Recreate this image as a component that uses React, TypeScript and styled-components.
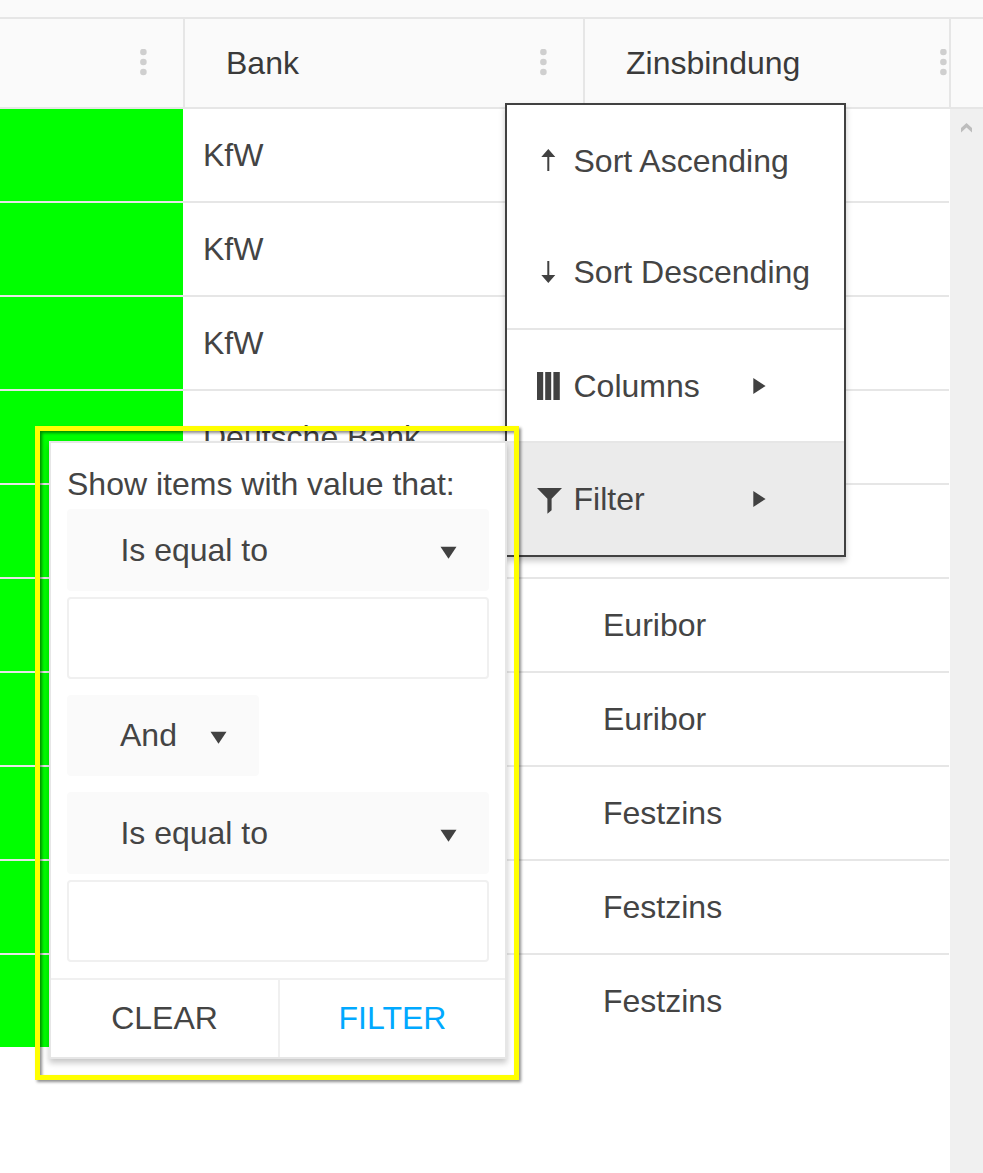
import React from "react";
import styled, { createGlobalStyle } from "styled-components";

const GlobalStyle = createGlobalStyle`
  *, *::before, *::after { box-sizing: border-box; }
  body {
    margin: 0;
    background: #fff;
    color: #444;
    font: 32px/36px "Liberation Sans", Arial, sans-serif;
    overflow: hidden;
  }
`;

const Page = styled.div`
  position: relative;
  width: 983px;
  height: 1173px;
  overflow: hidden;
  display: flex;
  flex-direction: column;
`;

const Toolbar = styled.div`
  height: 19px;
  flex: none;
  background: #fafafa;
  border-bottom: 2px solid #e6e6e6;
`;

const HeaderRow = styled.div`
  display: grid;
  grid-template-columns: 185px 400px 366px 1fr;
  height: 90px;
  flex: none;
  background: #fafafa;
  border-bottom: 2px solid #e6e6e6;
  color: #3a3a3a;
`;

const HeaderCell = styled.div<{ $tight?: boolean }>`
  display: flex;
  align-items: center;
  justify-content: space-between;
  padding: 0 ${(p) => (p.$tight ? "2px" : "36px")} 0 41px;
  border-right: 2px solid #e6e6e6;
`;

const Dots = styled.svg`
  display: block;
  width: 7px;
  height: 27px;
  margin-bottom: 2px;
  fill: #cfcfcf;
`;

const Body = styled.div`
  display: flex;
  flex: 1;
`;

const Rows = styled.div`
  width: 949px;
`;

const Row = styled.div`
  display: grid;
  grid-template-columns: 183px 400px 366px;
  height: 94px;
  border-bottom: 2px solid #e6e6e6;
  &:last-child { border-bottom-color: transparent; }
`;

const Cell = styled.div<{ $fill?: string }>`
  padding-left: 20px;
  line-height: 92px;
  background: ${(p) => p.$fill ?? "transparent"};
`;

const ScrollTrack = styled.div`
  width: 33px;
  margin-left: auto;
  padding: 14px 0 0 11px;
  background: #f0f0f0;
  svg { display: block; }
`;

const Menu = styled.div`
  position: absolute;
  left: 505px;
  top: 103px;
  width: 341px;
  height: 454px;
  display: flex;
  flex-direction: column;
  background: #fff;
  border: 2px solid #414141;
  box-shadow: 0 4px 6px rgba(0, 0, 0, 0.22);
`;

const SortGroup = styled.div`
  padding-bottom: 1px;
`;

const MenuItem = styled.div<{ $active?: boolean; $height: number }>`
  display: flex;
  align-items: center;
  height: ${(p) => p.$height}px;
  padding-left: 29px;
  background: ${(p) => (p.$active ? "#ebebeb" : "#fff")};
  svg { display: block; flex: none; }
`;

const MenuLabel = styled.span`
  width: 179.5px;
  margin-left: 9.5px;
  white-space: nowrap;
`;

const Separator = styled.div`
  height: 2px;
  background: #e6e6e6;
`;

const Popup = styled.div`
  position: absolute;
  left: 49px;
  top: 441px;
  width: 458px;
  height: 618px;
  display: flex;
  flex-direction: column;
  background: #fff;
  border: 2px solid #e6e6e6;
  box-shadow: 0 4px 6px rgba(0, 0, 0, 0.22);
`;

const Form = styled.div`
  flex: 1;
  padding: 23px 16px 0;
`;

const Prompt = styled.div`
  height: 43px;
  white-space: nowrap;
`;

const Select = styled.div<{ $small?: boolean }>`
  display: flex;
  align-items: center;
  justify-content: space-between;
  width: ${(p) => (p.$small ? "192px" : "auto")};
  height: ${(p) => (p.$small ? "81px" : "82px")};
  padding: 0 32px ${(p) => (p.$small ? "1px" : "0")} ${(p) => (p.$small ? "53px" : "53.4px")};
  border-radius: 4px;
  background: #fafafa;
  svg { display: block; margin-top: 4px; }
`;

const Input = styled.input`
  display: block;
  width: 100%;
  height: 82px;
  margin: 6px 0 16px;
  border: 2px solid #f0f0f0;
  border-radius: 4px;
  background: #fff;
  font: inherit;
  outline: none;
`;

const Gap = styled.div`
  height: 16px;
`;

const Actions = styled.div`
  display: grid;
  grid-template-columns: 229px 1fr;
  height: 79px;
  border-top: 2px solid #f0f0f0;
`;

const Action = styled.button<{ $primary?: boolean }>`
  padding: 0 0 2px;
  border: 0;
  border-right: ${(p) => (p.$primary ? "0" : "2px solid #f0f0f0")};
  background: none;
  font: inherit;
  color: ${(p) => (p.$primary ? "#00a9ff" : "#444")};
`;

const Highlight = styled.div`
  position: absolute;
  left: 35px;
  top: 426px;
  width: 484px;
  height: 654px;
  border: 5px solid #ffff00;
  filter: drop-shadow(2px 2px 1.5px rgba(0, 0, 0, 0.45));
  pointer-events: none;
`;

const MoreIcon = () => (
  <Dots viewBox="0 0 7 27">
    <circle cx="3.4" cy="3" r="3.3" />
    <circle cx="3.4" cy="13" r="3.3" />
    <circle cx="3.4" cy="23" r="3.3" />
  </Dots>
);

const Caret = () => (
  <svg width="17" height="13" viewBox="0 0 17 13">
    <path d="M.5 .7h16l-8 12z" fill="#414141" />
  </svg>
);

const SubmenuArrow = () => (
  <svg width="13" height="16" viewBox="0 0 13 16">
    <path d="M.3 0v16L12.6 8z" fill="#414141" />
  </svg>
);

const iconPaths = {
  up: "M12.3 2l7 8h-6v14h-2V10h-6z",
  down: "M12.3 25l7-8h-6V3h-2v14h-6z",
  columns: "M1 0h6.2v28H1zM9.2 0h6v28h-6zM17.4 0h6.4v28h-6.4z",
  filter: "M1 3h25L15.6 13.8V25.2l-4.2 3.5V13.8z",
};

const MenuIcon = ({ name }: { name: keyof typeof iconPaths }) => (
  <svg width="28" height="28" viewBox="0 0 28 28" overflow="visible">
    <path d={iconPaths[name]} fill="#414141" />
  </svg>
);

const rows: [string, string][] = [
  ["KfW", ""],
  ["KfW", ""],
  ["KfW", ""],
  ["Deutsche Bank", ""],
  ["", ""],
  ["", "Euribor"],
  ["", "Euribor"],
  ["", "Festzins"],
  ["", "Festzins"],
  ["", "Festzins"],
];

export default function App() {
  return (
    <Page>
      <GlobalStyle />
      <Toolbar />
      <HeaderRow>
        <HeaderCell><span /><MoreIcon /></HeaderCell>
        <HeaderCell>Bank<MoreIcon /></HeaderCell>
        <HeaderCell $tight>Zinsbindung<MoreIcon /></HeaderCell>
      </HeaderRow>
      <Body>
        <Rows>
          {rows.map(([bank, rate], i) => (
            <Row key={i}>
              <Cell $fill="#00ff00" />
              <Cell>{bank}</Cell>
              <Cell>{rate}</Cell>
            </Row>
          ))}
        </Rows>
        <ScrollTrack>
          <svg width="11" height="10" viewBox="0 0 11 10">
            <path d="M0 5L5.5 0L11 5V9.6L5.5 4.4L0 9.6z" fill="#bdbdbd" />
          </svg>
        </ScrollTrack>
      </Body>

      <Menu>
        <SortGroup>
          <MenuItem $height={112}><MenuIcon name="up" /><MenuLabel>Sort Ascending</MenuLabel></MenuItem>
          <MenuItem $height={110}><MenuIcon name="down" /><MenuLabel>Sort Descending</MenuLabel></MenuItem>
        </SortGroup>
        <Separator />
        <MenuItem $height={111}><MenuIcon name="columns" /><MenuLabel>Columns</MenuLabel><SubmenuArrow /></MenuItem>
        <Separator />
        <MenuItem $height={112} $active><MenuIcon name="filter" /><MenuLabel>Filter</MenuLabel><SubmenuArrow /></MenuItem>
      </Menu>

      <Popup>
        <Form>
          <Prompt>Show items with value that:</Prompt>
          <Select>Is equal to<Caret /></Select>
          <Input />
          <Select $small>And<Caret /></Select>
          <Gap />
          <Select>Is equal to<Caret /></Select>
          <Input />
        </Form>
        <Actions>
          <Action>CLEAR</Action>
          <Action $primary>FILTER</Action>
        </Actions>
      </Popup>
      <Highlight />
    </Page>
  );
}
